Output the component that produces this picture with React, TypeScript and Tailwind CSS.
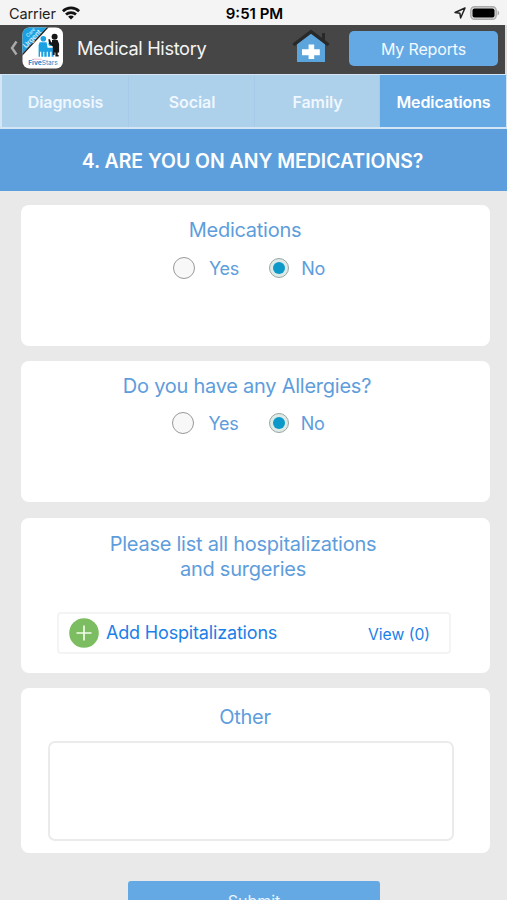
import type { ReactNode } from "react";
import { clsx } from "clsx";

const tabs = ["Diagnosis", "Social", "Family", "Medications"];

function StatusBar() {
  return (
    <div className="grid h-[25px] grid-cols-3 items-center bg-[#f4f4f4] pl-[9px] pr-[7px] text-black">
      <div className="flex items-center gap-[6px]">
        <span className="pt-px text-[14.5px] leading-[25px] tracking-[-0.1px] text-[#222]">Carrier</span>
        <svg width="18" height="14" viewBox="0 0 18 14" fill="none" stroke="#111" strokeWidth="2.7">
          <path d="M.9 5.2a11.5 11.5 0 0 1 16.2 0" />
          <path d="M4 8.6a7.3 7.3 0 0 1 10 0" />
          <path d="M9 13.6 6.1 10.8a4 4 0 0 1 5.8 0z" fill="#111" stroke="none" />
        </svg>
      </div>
      <span className="pt-px text-center text-[15px] font-semibold leading-[25px]">9:51 PM</span>
      <div className="flex items-center justify-end gap-[4px]">
        <svg width="12" height="12" viewBox="0 0 12 12" fill="none" stroke="#222" strokeWidth="1.5" strokeLinejoin="round">
          <path d="M11 1 1 5.5l4.9.8L6.6 11z" />
        </svg>
        <svg width="30" height="14" viewBox="0 0 30 14">
          <rect x="0.8" y="0.7" width="25.4" height="12.6" rx="3.8" fill="#ddd" stroke="#aaa" strokeWidth="1.4" />
          <rect x="2.5" y="2.4" width="22" height="9.2" rx="2" fill="#000" />
          <path d="M27.6 4.5c2 .8 2 4.2 0 5z" fill="#a5a5a5" />
        </svg>
      </div>
    </div>
  );
}

function AppLogo() {
  return (
    <svg width="42" height="42" viewBox="0 0 42 42" className="shrink-0">
      <clipPath id="logo-shape">
        <rect x="0.5" y="0.5" width="40.5" height="41" rx="7" />
      </clipPath>
      <g clipPath="url(#logo-shape)">
        <rect width="42" height="42" fill="#fff" />
        <path d="M0 0h25L0 27z" fill="#1ba1e2" />
        <path d="M25 0h2L0 29V27z" fill="#222" />
        <g fill="#e5f6ff" fontFamily="Inter, sans-serif" textAnchor="middle">
          <text transform="translate(9.8 6.6) rotate(-46)" fontSize="4.8">Care</text>
          <text transform="translate(11.8 13.4) rotate(-46)" fontSize="7" fontWeight="500">Urgent</text>
        </g>
        <g fill="#1ba1e2">
          <circle cx="21.3" cy="11.7" r="2.8" />
          <path d="M17.6 15.2h7l1 5.5h6v9h-2v-5h-1.5v5h-2.2v-5h-1.2v5h-2.4v-5h-1v5h-2v-5H18v5h-1.4V18z" />
          <circle cx="28.4" cy="17" r="2.1" />
        </g>
        <g fill="#171717">
          <circle cx="32.6" cy="9.8" r="3" />
          <path d="M30 13h5.6l1.5 4v8.4h-1.4V28h1v1.4h-3.3v-4h-.8V28h-1.8v-8.6l-3.7-2.6-.8-4.5h1.6l1.3 3.1.8.2z" />
        </g>
        <text x="21" y="37.8" textAnchor="middle" fontFamily="Inter, sans-serif" fontSize="6.6" fill="#1687c9">
          <tspan fontWeight="700">Five</tspan>Stars
        </text>
        <path d="M12 32.2h8" stroke="#e6a1bb" strokeWidth="0.7" />
      </g>
    </svg>
  );
}

function HomeIcon() {
  return (
    <svg width="38" height="36" viewBox="0 0 38 36" className="shrink-0">
      <path d="M5 16 19 4l14 12v18H5z" fill="#5ba5dc" />
      <path d="M30 5h3v8h-3z" fill="#292929" />
      <path d="M1.4 17 19 3.6 36.6 17" fill="none" stroke="#292929" strokeWidth="3.4" />
      <path d="M16.6 16.6h5.6v4.6h5.6v6h-5.6V31h-5.6v-3.8H10v-6h6.6z" fill="#fff" />
    </svg>
  );
}

function Header() {
  return (
    <header className="flex h-[49px] items-start border-r-2 border-[#dedede] bg-[#464646] pl-[9px]">
      <svg width="9" height="17" viewBox="0 0 9 17" fill="none" stroke="#aaa" strokeWidth="2.4" className="mt-[15px]">
        <path d="M7.5 1.5 3 8l4.5 6.5" />
      </svg>
      <div className="ml-[4px] mt-[2px]">
        <AppLogo />
      </div>
      <h1 className="ml-[13px] w-[215px] text-[18.2px] leading-[47px] tracking-[-0.34px] text-[#f4f4f4]">Medical History</h1>
      <div className="mt-[3px]">
        <HomeIcon />
      </div>
      <button className="ml-[19px] mt-[6px] h-[35px] w-[149px] shrink-0 rounded-[5px] bg-[#65a9e4] text-[16px] tracking-[-0.15px] text-[#f3f9ff]">
        My Reports
      </button>
    </header>
  );
}

function Radio({ label, checked }: { label: string; checked?: boolean }) {
  return (
    <label className="flex items-center text-[18px] leading-6 tracking-[-0.2px] text-[#5e9ddc]">
      <span
        className={clsx(
          "mb-px flex items-center justify-center rounded-full border",
          checked ? "mr-[12px] size-[20px] border-[#9ba6a3] bg-[#dcebe8]" : "mr-[14px] size-[22px] border-[#999] bg-[#f8f8f8]"
        )}
      >
        {checked && <span className="size-[12px] rounded-full bg-[#0c98c8]" />}
      </span>
      <span className="pt-px">{label}</span>
    </label>
  );
}

function Card({ className, children }: { className?: string; children: ReactNode }) {
  return <section className={clsx("rounded-[8px] bg-white text-center", className)}>{children}</section>;
}

function Question({ children }: { children: ReactNode }) {
  return <h3 className="text-[20px] leading-[24.5px] tracking-[-0.25px] text-[#5e9ddc]">{children}</h3>;
}

export default function App() {
  return (
    <div className="h-[900px] w-[507px] overflow-hidden bg-[#e9e9e9] font-['Inter',sans-serif]">
      <StatusBar />
      <Header />
      <nav className="grid h-[55px] grid-cols-[127px_126px_125px_126px] border-b-2 border-l-2 border-r border-t border-[#d4e6f5] bg-[#add0eb]">
        {tabs.map((tab) => (
          <button
            key={tab}
            className={clsx(
              "pl-px pt-[2px] text-[16px] font-semibold tracking-[-0.1px]",
              tab === "Medications" ? "bg-[#65a9e4] text-white" : "border-r border-[#a6cbe8] text-[#eff7ff]"
            )}
          >
            {tab}
          </button>
        ))}
      </nav>
      <h2 className="h-[62px] bg-[#5d9fdc] pr-[2px] text-center text-[19.4px] font-semibold leading-[64px] text-white">
        4. ARE YOU ON ANY MEDICATIONS?
      </h2>

      <main className="flex flex-col pl-[21px] pr-[17px] pt-[14px]">
        <Card className="h-[141px] pr-[21px] pt-[13px]">
          <Question>Medications</Question>
          <div className="mt-[13.5px] flex justify-center gap-[30px] pl-[8px]">
            <Radio label="Yes" />
            <Radio label="No" checked />
          </div>
        </Card>

        <Card className="mt-[15px] h-[141px] pr-[17px] pt-[13px]">
          <Question>Do you have any Allergies?</Question>
          <div className="mt-[12.5px] flex justify-center gap-[30px] pl-[3px]">
            <Radio label="Yes" />
            <Radio label="No" checked />
          </div>
        </Card>

        <Card className="mt-[16px] h-[155px] pt-[14px]">
          <div className="pr-[25px] tracking-[-0.2px]">
            <Question>
              Please list all hospitalizations
              <br />
              and surgeries
            </Question>
          </div>
          <div className="ml-[36px] mt-[31px] flex h-[42px] w-[394px] items-center rounded-[4px] border-2 border-[#f4f4f4] pl-[10px] pr-[19px] text-[#1b7fe8]">
            <svg width="30" height="30" viewBox="0 0 30 30">
              <circle cx="15" cy="15" r="14.8" fill="#7dbd61" />
              <path d="M15 7.5v15M7.5 15h15" stroke="#f2fbea" strokeWidth="1.7" />
            </svg>
            <span className="ml-[7px] pb-px text-[18px] tracking-[-0.17px]">Add Hospitalizations</span>
            <span className="ml-auto pt-[3px] text-[15.7px]">View (0)</span>
          </div>
        </Card>

        <Card className="mt-[15px] h-[165px] pt-[17px]">
          <div className="pr-[21px]">
            <Question>Other</Question>
          </div>
          <textarea className="ml-[27px] mt-[11.5px] block h-[100px] w-[406px] resize-none rounded-[7px] border-2 border-[#ebebeb] bg-white" />
        </Card>

        <button className="ml-[107px] mt-[28px] h-[40px] w-[252px] rounded-[3px] bg-[#65a9e4] text-[16px] text-[#e9f5ff]">
          Submit
        </button>
      </main>
    </div>
  );
}
